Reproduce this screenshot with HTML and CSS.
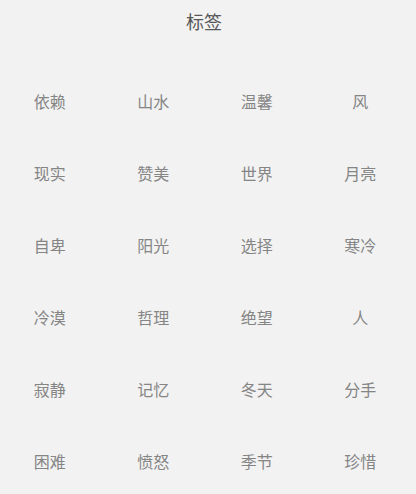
FILE: index.html
```html
<!DOCTYPE html>
<html lang="zh">
<head>
<meta charset="utf-8">
<link rel="stylesheet" href="styles.css">
</head>
<body>
<div class="page">
  <h1 class="title">标签</h1>
  <div class="tags">
    <span class="tag">依赖</span><span class="tag">山水</span><span class="tag">温馨</span><span class="tag">风</span>
    <span class="tag">现实</span><span class="tag">赞美</span><span class="tag">世界</span><span class="tag">月亮</span>
    <span class="tag">自卑</span><span class="tag">阳光</span><span class="tag">选择</span><span class="tag">寒冷</span>
    <span class="tag">冷漠</span><span class="tag">哲理</span><span class="tag">绝望</span><span class="tag">人</span>
    <span class="tag">寂静</span><span class="tag">记忆</span><span class="tag">冬天</span><span class="tag">分手</span>
    <span class="tag">困难</span><span class="tag">愤怒</span><span class="tag">季节</span><span class="tag">珍惜</span>
  </div>
</div>
</body>
</html>
```

FILE: styles.css
```css
html, body {
  margin: 0;
  padding: 0;
  background: #f2f2f2;
  overflow: hidden;
}
body {
  font-family: "Noto Sans CJK SC", "Noto Sans", sans-serif;
}
.page {
  width: 416px;
  height: 494px;
}
.title {
  margin: 0;
  padding-top: 9px;
  padding-right: 8px;
  font-size: 18px;
  line-height: 24px;
  font-weight: normal;
  color: #585858;
  text-align: center;
}
.tags {
  margin-top: 32px;
  margin-left: -2px;
  display: grid;
  grid-template-columns: repeat(4, 103.5px);
  grid-auto-rows: 72px;
}
.tag {
  display: flex;
  align-items: center;
  justify-content: center;
  font-size: 16px;
  color: #858585;
}
```
